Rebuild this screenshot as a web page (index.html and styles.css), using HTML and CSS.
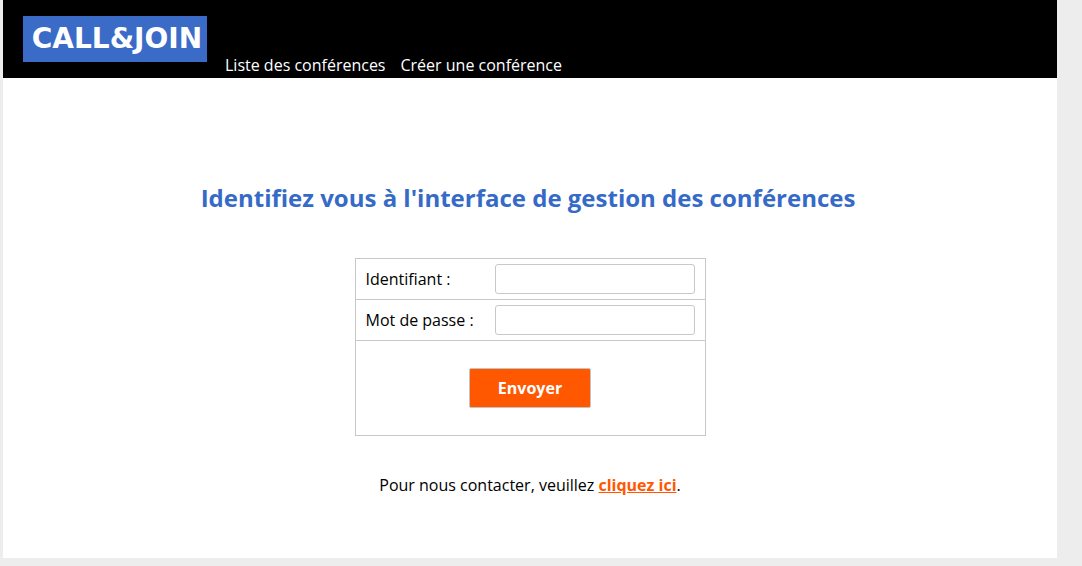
FILE: index.html
```html
<!DOCTYPE html>
<html lang="fr">
<head>
<meta charset="utf-8">
<title>Call&amp;Join</title>
<link rel="stylesheet" href="styles.css">
</head>
<body>
<div class="page">
  <header class="header">
    <a class="logo" href="#">CALL&amp;JOIN</a>
    <nav class="nav">
      <a href="#">Liste des conférences</a>
      <a href="#">Créer une conférence</a>
    </nav>
  </header>
  <main class="main">
    <h1 class="title">Identifiez vous à l'interface de gestion des conférences</h1>
    <form class="login">
      <div class="row">
        <label for="user">Identifiant :</label>
        <input class="field" id="user" type="text">
      </div>
      <div class="row">
        <label for="password">Mot de passe :</label>
        <input class="field" id="password" type="password">
      </div>
      <div class="actions">
        <button class="submit" type="submit">Envoyer</button>
      </div>
    </form>
    <p class="contact">Pour nous contacter, veuillez <a href="#">cliquez ici</a>.</p>
  </main>
</div>
</body>
</html>
```

FILE: styles.css
```css
* {
  box-sizing: border-box;
}

body {
  margin: 0;
  padding: 0 25px 8px 3px;
  min-height: 100vh;
  display: flex;
  background: #ededed;
  color: #000;
  font: 16px/22px "Open Sans", sans-serif;
}

.page {
  flex: 1;
  background: #fff;
}

.header {
  display: flex;
  align-items: flex-end;
  gap: 18px;
  height: 78px;
  padding: 0 20px 2px;
  background: #000;
}

.logo {
  width: 184px;
  margin-bottom: 14px;
  background: #3a6bc6;
  color: #fff;
  font: bold 28px/46px "DejaVu Sans", sans-serif;
  text-align: center;
  text-decoration: none;
  padding-left: 4px;
}

.nav {
  display: flex;
  gap: 15px;
}

.nav a {
  color: #fff;
  text-decoration: none;
}

.main {
  display: flex;
  flex-direction: column;
  align-items: center;
  padding: 104px 20px 40px;
}

.title {
  margin: 0 0 44px;
  padding-right: 4px;
  color: #366ac7;
  font-size: 24px;
  line-height: 32px;
}

.login {
  width: 351px;
  border: 1px solid #c8c8c8;
}

.row {
  display: flex;
  align-items: center;
  justify-content: space-between;
  padding: 5px 10px;
  border-bottom: 1px solid #c8c8c8;
}

.field {
  width: 200px;
  height: 30px;
  padding: 4px 8px;
  border: 1px solid #c8c8c8;
  border-radius: 3px;
  background: #fff;
  font: inherit;
}

.actions {
  display: flex;
  justify-content: center;
  padding: 27px;
}

.submit {
  width: 122px;
  height: 40px;
  padding: 0;
  border: 1px solid #c3c3c3;
  border-radius: 2px;
  background: #ff5800;
  color: #fff;
  font: bold 16px/22px "Open Sans", sans-serif;
}

.contact {
  margin: 38px 0 0;
}

.contact a {
  color: #ff5800;
  font-weight: bold;
}
```
